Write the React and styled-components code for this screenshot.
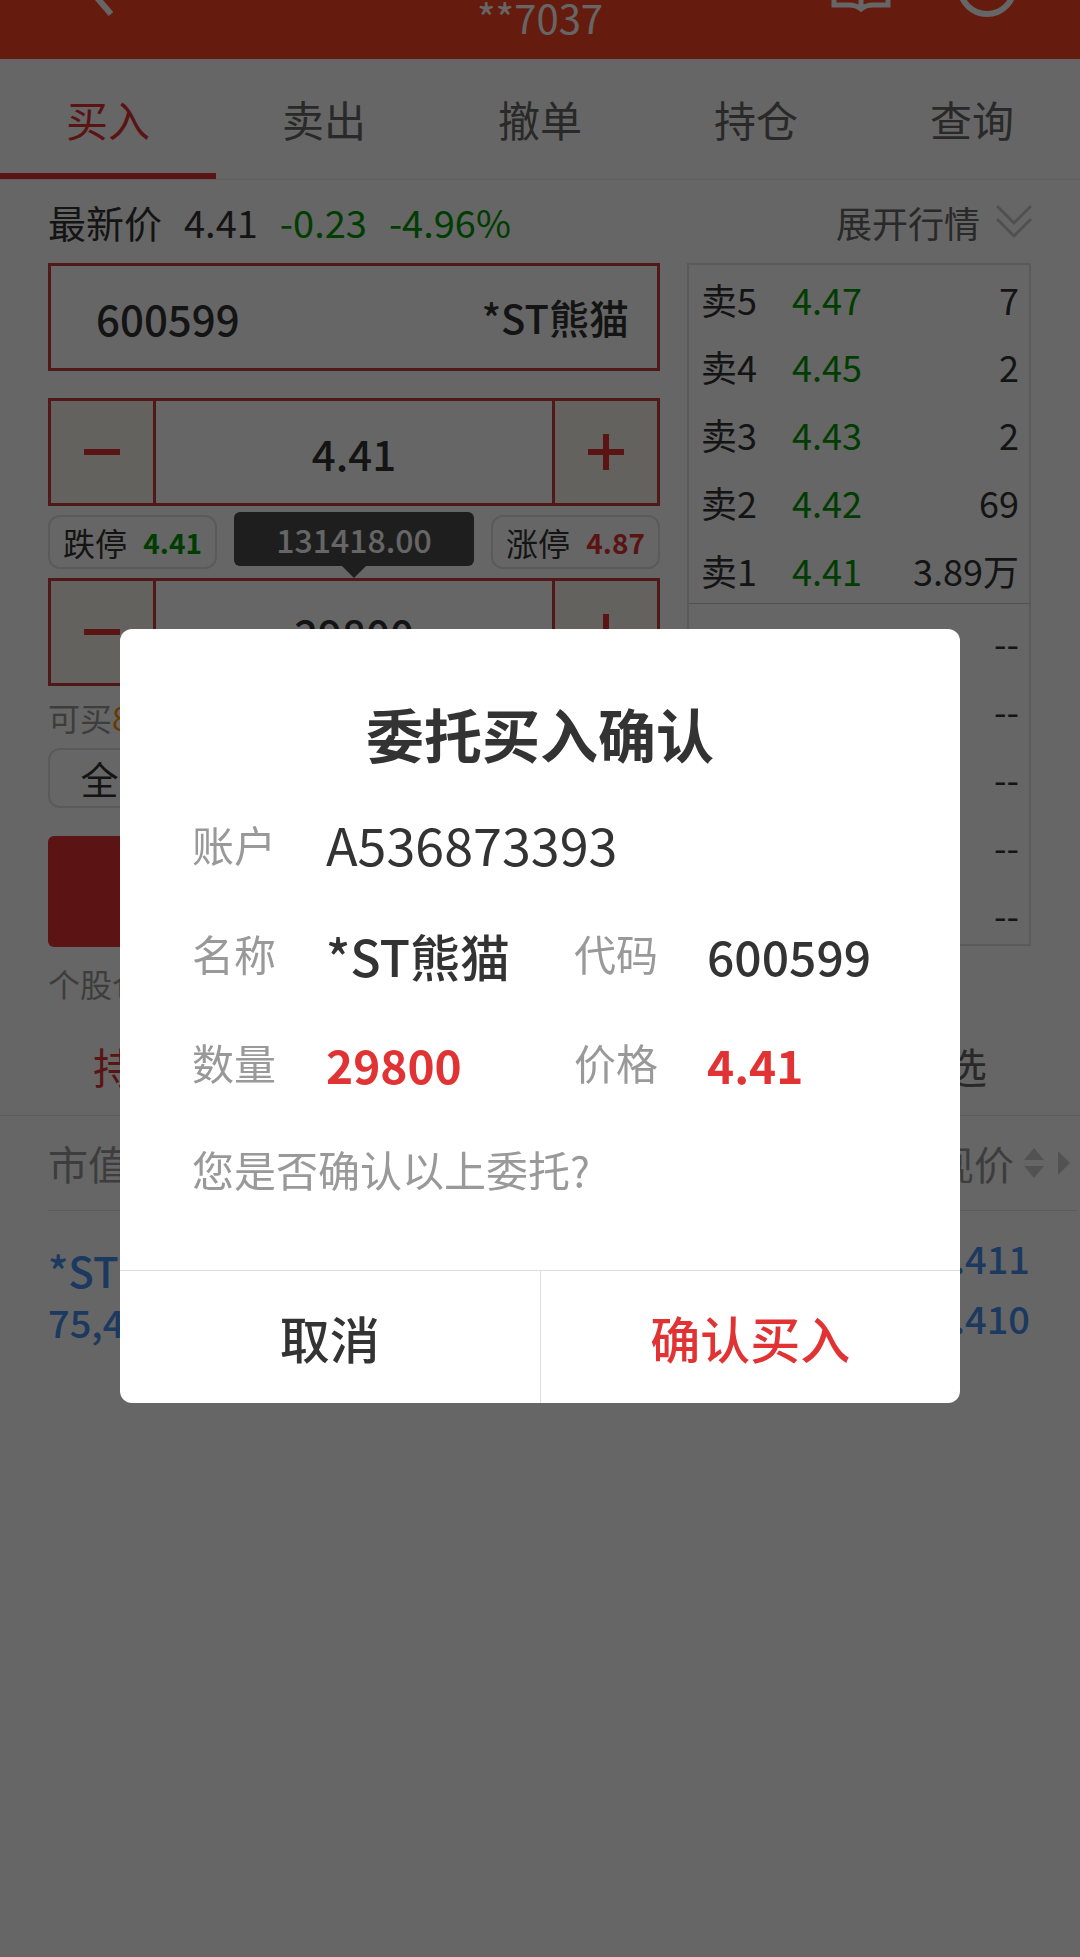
import { useState } from "react";
import styled, { createGlobalStyle } from "styled-components";

//DATA
const mainTabs = ["买入", "卖出", "撤单", "持仓", "查询"];
const listTabs = ["持仓", "委托", "成交", "自选"];
const positions = ["全仓", "1/2", "1/3", "1/4"];

const asks = [
  { label: "卖5", price: "4.47", amount: "7" },
  { label: "卖4", price: "4.45", amount: "2" },
  { label: "卖3", price: "4.43", amount: "2" },
  { label: "卖2", price: "4.42", amount: "69" },
  { label: "卖1", price: "4.41", amount: "3.89万" },
];

const bids = [
  { label: "买1", price: "--", amount: "--" },
  { label: "买2", price: "--", amount: "--" },
  { label: "买3", price: "--", amount: "--" },
  { label: "买4", price: "--", amount: "--" },
  { label: "买5", price: "--", amount: "--" },
];

//ICONS
const BackIcon = () => (
  <svg width="32" height="20" viewBox="0 0 32 20" fill="none">
    <path d="M8 -8 L27 14" stroke="#fff" strokeWidth="6" />
  </svg>
);

const BookIcon = () => (
  <svg width="60" height="20" viewBox="0 0 60 20" fill="none">
    <path
      d="M3 -10 V5 H18 Q25 5 30 9 Q35 5 42 5 H57 V-10 M30 -10 V9"
      stroke="#fff"
      strokeWidth="5"
    />
  </svg>
);

const CircleIcon = () => (
  <svg width="62" height="20" viewBox="0 0 62 20" fill="none">
    <circle cx="31" cy="-13" r="27" stroke="#fff" strokeWidth="6" />
  </svg>
);

const DoubleDownIcon = () => (
  <svg width="36" height="36" viewBox="0 0 36 36" fill="none">
    <path
      d="M1 2 L18 19 L35 2 M1 15 L18 32 L35 15"
      stroke="#c8c8c8"
      strokeWidth="3"
    />
  </svg>
);

const MinusIcon = () => (
  <svg width="36" height="36" viewBox="0 0 36 36">
    <path d="M0 15h36v6H0z" fill="#e13333" />
  </svg>
);

const PlusIcon = () => (
  <svg width="36" height="36" viewBox="0 0 36 36">
    <path d="M0 15h36v6H0zM15 0h6v36h-6z" fill="#e13333" />
  </svg>
);

const SortIcon = () => (
  <svg width="20" height="30" viewBox="0 0 20 30">
    <path d="M0 12L10 0L20 12zM0 18L10 30L20 18z" fill="#cdcdcd" />
  </svg>
);

const MoreIcon = () => (
  <svg width="12" height="24" viewBox="0 0 12 24">
    <path d="M0 0L12 12L0 24z" fill="#cdcdcd" />
  </svg>
);

//COMPONENTS
const Stepper = ({ name, value, onChange, step, digits }) => {
  const change = (diff) => onChange((Number(value) + diff).toFixed(digits));

  return (
    <StepperBox>
      <StepButton aria-label={`${name}减少`} onClick={() => change(-step)}>
        <MinusIcon />
      </StepButton>
      <StepInput
        aria-label={name}
        value={value}
        onChange={(e) => onChange(e.target.value)}
      />
      <StepButton aria-label={`${name}增加`} onClick={() => change(step)}>
        <PlusIcon />
      </StepButton>
    </StepperBox>
  );
};

const BookRows = ({ rows }) => (
  <tbody>
    {rows.map((row) => (
      <tr key={row.label}>
        <th scope="row">{row.label}</th>
        <td className="price">{row.price}</td>
        <td className="amount">{row.amount}</td>
      </tr>
    ))}
  </tbody>
);

const ConfirmDialog = ({ price, amount, onClose }) => (
  <Overlay>
    <Dialog role="dialog" aria-modal="true" aria-labelledby="confirm-title">
      <DialogTitle id="confirm-title">委托买入确认</DialogTitle>
      <Details>
        <dt>账户</dt>
        <dd className="account">A536873393</dd>
        <dt>名称</dt>
        <dd className="name">*ST熊猫</dd>
        <dt>代码</dt>
        <dd>600599</dd>
        <dt>数量</dt>
        <dd className="red">{amount}</dd>
        <dt>价格</dt>
        <dd className="red">{price}</dd>
      </Details>
      <Question>您是否确认以上委托?</Question>
      <DialogFooter>
        <DialogButton onClick={onClose}>取消</DialogButton>
        <DialogButton $primary onClick={onClose}>
          确认买入
        </DialogButton>
      </DialogFooter>
    </Dialog>
  </Overlay>
);

const App = () => {
  const [code, setCode] = useState("600599");
  const [price, setPrice] = useState("4.41");
  const [amount, setAmount] = useState("29800");
  const [showConfirm, setShowConfirm] = useState(true);

  return (
    <>
      <GlobalStyle />
      <Header>
        <IconButton aria-label="返回">
          <BackIcon />
        </IconButton>
        <h1>**7037</h1>
        <HeaderActions>
          <IconButton aria-label="帮助">
            <BookIcon />
          </IconButton>
          <IconButton aria-label="刷新">
            <CircleIcon />
          </IconButton>
        </HeaderActions>
      </Header>

      <MainTabs>
        {mainTabs.map((tab, i) => (
          <MainTab key={tab} $active={i === 0}>
            {tab}
          </MainTab>
        ))}
      </MainTabs>

      <QuoteBar>
        <span>最新价</span>
        <span>4.41</span>
        <Green>-0.23</Green>
        <Green>-4.96%</Green>
        <ExpandButton>
          展开行情
          <DoubleDownIcon />
        </ExpandButton>
      </QuoteBar>

      <TradeArea>
        <Form>
          <CodeBox>
            <input
              aria-label="股票代码"
              value={code}
              onChange={(e) => setCode(e.target.value)}
            />
            <span>*ST熊猫</span>
          </CodeBox>
          <Stepper
            name="价格"
            value={price}
            onChange={setPrice}
            step={0.01}
            digits={2}
          />
          <LimitRow>
            <LimitButton onClick={() => setPrice("4.41")}>
              跌停 <Green as="b">4.41</Green>
            </LimitButton>
            <Tooltip>131418.00</Tooltip>
            <LimitButton onClick={() => setPrice("4.87")}>
              涨停 <Red as="b">4.87</Red>
            </LimitButton>
          </LimitRow>
          <Stepper
            name="数量"
            value={amount}
            onChange={setAmount}
            step={100}
            digits={0}
          />
          <Available>
            可买<em>84900</em>股
          </Available>
          <PositionRow>
            {positions.map((item) => (
              <button key={item}>{item}</button>
            ))}
          </PositionRow>
          <BuyButton onClick={() => setShowConfirm(true)}>买入</BuyButton>
          <Hint>个股仓位</Hint>
        </Form>
        <Book>
          <BookRows rows={asks} />
          <BookRows rows={bids} />
        </Book>
      </TradeArea>

      <ListTabs>
        {listTabs.map((tab, i) => (
          <ListTab key={tab} $active={i === 0}>
            {tab}
          </ListTab>
        ))}
      </ListTabs>

      <Holdings>
        <thead>
          <tr>
            <th>市值</th>
            <th>
              <SortButton>
                成本/现价
                <SortIcon />
                <MoreIcon />
              </SortButton>
            </th>
          </tr>
        </thead>
        <tbody>
          <tr>
            <td>
              <StockName>*ST熊猫</StockName>
              <StockValue>75,411.00</StockValue>
            </td>
            <td>
              <PriceValue>4.411</PriceValue>
              <PriceValue>4.410</PriceValue>
            </td>
          </tr>
        </tbody>
      </Holdings>

      {showConfirm && (
        <ConfirmDialog
          price={price}
          amount={amount}
          onClose={() => setShowConfirm(false)}
        />
      )}
    </>
  );
};

//STYLES
const GlobalStyle = createGlobalStyle`
  * {
    box-sizing: border-box;
    margin: 0;
    padding: 0;
  }
  body {
    min-height: 100vh;
    background: #fff;
    color: #333;
    font-family: "Noto Sans CJK SC", sans-serif;
    font-size: 36px;
  }
  button, input {
    font: inherit;
    color: inherit;
    background: none;
    border: none;
    outline: none;
  }
  button {
    cursor: pointer;
  }
  svg {
    display: block;
    flex: none;
  }
`;

const Header = styled.header`
  display: grid;
  grid-template-columns: 1fr auto 1fr;
  align-items: start;
  height: 59px;
  padding: 0 62px 0 84px;
  overflow: hidden;
  background: #fc4623;
  color: #fff;
  h1 {
    margin-right: 22px;
    font-size: 40px;
    font-weight: 400;
    line-height: 34px;
  }
`;

const HeaderActions = styled.div`
  display: flex;
  justify-content: flex-end;
  gap: 65px;
`;

const IconButton = styled.button`
  display: flex;
`;

const MainTabs = styled.nav`
  display: flex;
  height: 121px;
  border-bottom: 1px solid #ebebeb;
`;

const MainTab = styled.button`
  flex: 1;
  padding-top: 4px;
  border-bottom: 6px solid ${({ $active }) => ($active ? "#e13333" : "transparent")};
  color: ${({ $active }) => ($active ? "#e13333" : "#666")};
  font-size: 42px;
`;

const QuoteBar = styled.div`
  display: flex;
  align-items: center;
  gap: 22px;
  height: 83px;
  padding: 0 48px;
  font-size: 38px;
`;

const Green = styled.span`
  color: #009900;
`;

const Red = styled.span`
  color: #e13333;
`;

const ExpandButton = styled.button`
  display: flex;
  align-items: center;
  gap: 16px;
  margin-left: auto;
  color: #666;
  font-size: 36px;
`;

const TradeArea = styled.section`
  display: grid;
  grid-template-columns: 612fr 344fr;
  gap: 27px;
  align-items: start;
  padding: 0 49px 0 48px;
`;

const Form = styled.div`
  display: flex;
  flex-direction: column;
  min-width: 0;
`;

const CodeBox = styled.div`
  display: flex;
  align-items: center;
  justify-content: space-between;
  height: 108px;
  margin-bottom: 27px;
  padding: 0 28px 0 45px;
  border: 3px solid #c83c3c;
  font-size: 40px;
  font-weight: 500;
  input {
    width: 240px;
    font-size: 42px;
  }
`;

const StepperBox = styled.div`
  display: flex;
  height: 108px;
  border: 3px solid #c83c3c;
`;

const StepButton = styled.button`
  display: flex;
  flex: none;
  align-items: center;
  justify-content: center;
  width: 102px;
  background: #fbf5eb;
`;

const StepInput = styled.input`
  flex: 1;
  min-width: 0;
  border: solid #c83c3c;
  border-width: 0 3px;
  font-size: 42px;
  font-weight: 500;
  text-align: center;
`;

const LimitRow = styled.div`
  display: flex;
  align-items: center;
  justify-content: space-between;
  height: 72px;
`;

const LimitButton = styled.button`
  display: flex;
  align-items: center;
  justify-content: space-between;
  width: 169px;
  height: 54px;
  padding: 0 13px;
  border: 2px solid #e0e0e0;
  border-radius: 12px;
  font-size: 32px;
  white-space: nowrap;
  b {
    font-size: 28px;
    font-weight: 700;
  }
`;

const Tooltip = styled.div`
  position: relative;
  width: 240px;
  height: 54px;
  margin-bottom: 6px;
  border-radius: 6px;
  background: #4b4b4b;
  color: #fff;
  font-size: 32px;
  font-weight: 500;
  line-height: 54px;
  text-align: center;
  &::after {
    content: "";
    position: absolute;
    top: 100%;
    left: 50%;
    margin-left: -12px;
    border: 12px solid transparent;
    border-top-color: #4b4b4b;
    border-bottom: none;
  }
`;

const Available = styled.p`
  color: #999;
  font-size: 32px;
  line-height: 62px;
  em {
    color: #ff8f00;
    font-style: normal;
  }
`;

const PositionRow = styled.div`
  display: grid;
  grid-template-columns: repeat(4, 1fr);
  gap: 16px;
  button {
    height: 60px;
    border: 2px solid #e0e0e0;
    border-radius: 12px;
    font-size: 38px;
    line-height: 56px;
  }
`;

const BuyButton = styled.button`
  height: 111px;
  margin-top: 28px;
  border-radius: 6px;
  background: #e63030;
  color: #fff;
  font-size: 42px;
`;

const Hint = styled.p`
  color: #999;
  font-size: 32px;
  line-height: 72px;
`;

const Book = styled.table`
  width: 100%;
  border: 2px solid #e0e0e0;
  border-spacing: 0;
  line-height: 48px;
  th,
  td {
    height: 68px;
    padding-top: 8px;
    font-weight: 400;
    text-align: left;
  }
  th {
    width: 103px;
    padding-left: 12px;
  }
  .amount {
    padding-right: 10px;
    text-align: right;
  }
  tbody:first-child {
    th,
    td {
      padding-top: 0;
    }
    .price {
      color: #009900;
    }
    tr:first-child > * {
      height: 67px;
    }
    tr:last-child > * {
      border-bottom: 1px solid #c8c8c8;
    }
  }
`;

const ListTabs = styled.nav`
  display: flex;
  height: 97px;
  padding-bottom: 4px;
  border-bottom: 1px solid #e6e6e6;
`;

const ListTab = styled.button`
  flex: 1;
  color: ${({ $active }) => ($active ? "#e13333" : "#666")};
  font-size: 42px;
`;

const Holdings = styled.table`
  width: calc(100% - 51px);
  margin-left: 48px;
  border-spacing: 0;
  th {
    height: 95px;
    border-bottom: 1px solid #e6e6e6;
    color: #999;
    font-size: 40px;
    font-weight: 400;
    text-align: left;
  }
  td {
    padding-top: 17px;
    color: #468eee;
    font-weight: 500;
    vertical-align: bottom;
  }
  td:last-child {
    padding-right: 47px;
    text-align: right;
  }
`;

const SortButton = styled.button`
  display: flex;
  align-items: center;
  gap: 10px;
  margin-left: auto;
  padding-right: 7px;
  svg + svg {
    margin-left: 4px;
  }
`;

const StockName = styled.p`
  font-size: 42px;
  line-height: 52px;
`;

const StockValue = styled.p`
  font-size: 38px;
  line-height: 52px;
`;

const PriceValue = styled.p`
  font-size: 38px;
  line-height: 60px;
`;

const Overlay = styled.div`
  position: fixed;
  inset: 0;
  padding: 629px 120px 0;
  background: rgba(0, 0, 0, 0.6);
`;

const Dialog = styled.div`
  overflow: hidden;
  padding-top: 62px;
  border-radius: 12px;
  background: #fff;
`;

const DialogTitle = styled.h2`
  margin-bottom: 14px;
  font-size: 58px;
  font-weight: 700;
  line-height: 84px;
  text-align: center;
`;

const Details = styled.dl`
  display: grid;
  grid-template-columns: 134px 248px 133px 1fr;
  grid-auto-rows: 109px;
  align-items: center;
  padding-left: 72px;
  dt {
    color: #999;
    font-size: 42px;
  }
  dd {
    padding-top: 4px;
    font-size: 48px;
    font-weight: 500;
    white-space: nowrap;
  }
  .account {
    grid-column: span 3;
    padding-top: 0;
    font-size: 52px;
    font-weight: 400;
  }
  .name {
    font-size: 50px;
  }
  .red {
    color: #e13333;
    font-size: 46px;
    font-weight: 700;
  }
`;

const Question = styled.p`
  padding: 0 72px 48px;
  color: #999;
  font-size: 42px;
  line-height: 106px;
`;

const DialogFooter = styled.div`
  display: flex;
  border-top: 1px solid #ddd;
`;

const DialogButton = styled.button`
  flex: 1;
  height: 132px;
  color: ${({ $primary }) => ($primary ? "#e13333" : "#333")};
  font-size: 50px;
  font-weight: 500;
  & + & {
    border-left: 1px solid #ddd;
  }
`;

export default App;
